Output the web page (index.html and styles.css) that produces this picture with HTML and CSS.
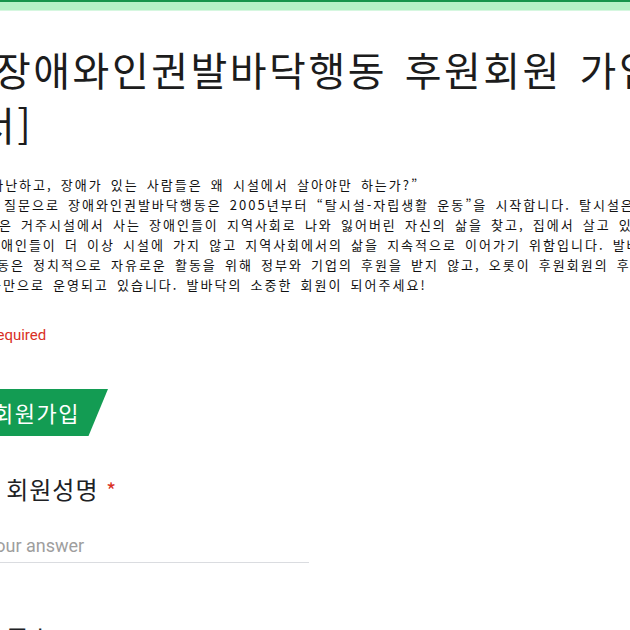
FILE: index.html
```html
<!DOCTYPE html>
<html lang="ko">
<head>
<meta charset="utf-8">
<title>장애와인권발바닥행동 후원회원 가입신청서</title>
<link rel="stylesheet" href="styles.css">
</head>
<body>
<div class="topbar"></div>
<main class="form">
  <header class="head">
    <h1 class="title">[장애와인권발바닥행동 후원회원 가입신청<br>서]</h1>
    <div class="desc">
      <p class="line l1">“가난하고, 장애가 있는 사람들은 왜 시설에서 살아야만 하는가?”</p>
      <p class="line l2">이 질문으로 장애와인권발바닥행동은 2005년부터 “탈시설-자립생활 운동”을 시작합니다. 탈시설은</p>
      <p class="line l3">같은 거주시설에서 사는 장애인들이 지역사회로 나와 잃어버린 자신의 삶을 찾고, 집에서 살고 있는</p>
      <p class="line l4">장애인들이 더 이상 시설에 가지 않고 지역사회에서의 삶을 지속적으로 이어가기 위함입니다. 발바닥</p>
      <p class="line l5">활동은 정치적으로 자유로운 활동을 위해 정부와 기업의 후원을 받지 않고, 오롯이 후원회원의 후원</p>
      <p class="line l6">금만으로 운영되고 있습니다. 발바닥의 소중한 회원이 되어주세요!</p>
    </div>
    <div class="req">* Required</div>
  </header>

  <section class="section">
    <div class="sec-title">회원가입</div>
  </section>

  <div class="question">
    <div class="q-label"><span class="num">1)</span> 회원성명 <span class="star">*</span></div>
    <div class="answer"><span class="ph">Your answer</span></div>
  </div>

  <div class="question next">
    <div class="q-label"><span class="num">2)</span> 주소 <span class="star">*</span></div>
  </div>
</main>
</body>
</html>
```

FILE: styles.css
```css
html, body {
  margin: 0;
  padding: 0;
  background: #ffffff;
}
body {
  width: 630px;
  height: 630px;
  overflow: hidden;
  font-family: "Noto Sans CJK KR", "Noto Sans", sans-serif;
  color: #202124;
}
.topbar {
  height: 8px;
  border-top: 2px solid #16944c;
  border-bottom: 1px solid #d6f7e0;
  background: #b5f1c7;
}
.form {
  margin-left: -22px;
  width: 900px;
}
.head {
  padding-top: 31px;
}
.title {
  margin: 0;
  font-weight: 400;
  font-size: 40px;
  line-height: 55px;
  letter-spacing: 2.5px;
  word-spacing: 4px;
  color: #1c1c1c;
  white-space: nowrap;
}
.desc {
  margin-top: 23px;
}
.line {
  margin: 0;
  font-size: 13px;
  line-height: 20px;
  letter-spacing: 2px;
  word-spacing: 2.5px;
  white-space: nowrap;
  color: #111;
}
.l1 { margin-left: 5px; }
.l2 { margin-left: 4px; }
.l3 { margin-left: 7px; }
.l4 { margin-left: 9px; }
.l5 { margin-left: 5px; }
.l6 { margin-left: 11px; }
.req {
  margin-top: 30px;
  margin-left: -1px;
  font-family: Roboto, "Liberation Sans", sans-serif;
  font-size: 15px;
  line-height: 20px;
  color: #d93025;
}
.section {
  margin-top: 44px;
  height: 47px;
}
.sec-title {
  width: 130px;
  height: 47px;
  box-sizing: border-box;
  padding-left: 15px;
  line-height: 47px;
  font-size: 22px;
  letter-spacing: 1.5px;
  color: #ffffff;
  background: #139c53;
  clip-path: polygon(0 0, 100% 0, 85% 100%, 0 100%);
}
.question {
  margin-top: 38px;
}
.q-label {
  margin-left: -3px;
  font-size: 24px;
  line-height: 30px;
  letter-spacing: 1px;
  color: #202124;
}
.star {
  color: #d93025;
  font-size: 21px;
}
.answer {
  margin-top: 30px;
  width: 331px;
  border-bottom: 1px solid #dadce0;
  padding-bottom: 5px;
}
.ph {
  display: block;
  margin-left: 7px;
  font-family: Roboto, "Liberation Sans", sans-serif;
  font-size: 18px;
  line-height: 22px;
  color: #9e9e9e;
}
.next {
  margin-top: 59px;
}
```
